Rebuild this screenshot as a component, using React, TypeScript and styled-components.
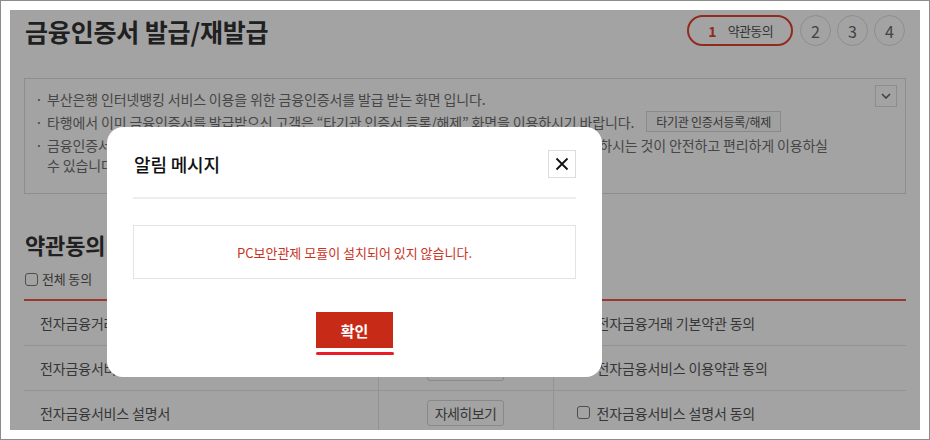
import styled, { createGlobalStyle } from 'styled-components';

const GlobalStyle = createGlobalStyle`
  html, body {
    margin: 0;
    padding: 0;
    background: #fff;
  }
  body {
    font-family: "Noto Sans CJK KR", "Noto Sans", sans-serif;
  }
`;

const Frame = styled.div`
  width: 930px;
  height: 440px;
  box-sizing: border-box;
  border: 1px solid #8c8c8c;
  padding: 9px;
  letter-spacing: -0.01em;
`;

const Viewport = styled.div`
  position: relative;
  width: 910px;
  height: 420px;
  overflow: hidden;
  background: #fff;
`;

const Page = styled.div`
  padding: 5px 14px 0 14px;
`;

const Header = styled.div`
  display: flex;
  justify-content: space-between;
  align-items: flex-start;
`;

const PageTitle = styled.h1`
  margin: 0 0 0 1px;
  font-size: 25px;
  line-height: 32px;
  font-weight: 700;
  color: #333;
`;

const Steps = styled.ol`
  display: flex;
  gap: 6px;
  margin: 0 1px 0 0;
  padding: 0;
  list-style: none;
`;

const Step = styled.li<{ $active?: boolean }>`
  box-sizing: border-box;
  height: 31px;
  min-width: 31px;
  display: flex;
  align-items: center;
  justify-content: center;
  gap: 12px;
  border-radius: 16px;
  border: ${p => (p.$active ? '2px solid #e0452f' : '1px solid #dedede')};
  padding: ${p => (p.$active ? '0 18px 0 19px' : '0')};
  margin-right: ${p => (p.$active ? '1px' : '0')};
  font-size: ${p => (p.$active ? '13px' : '16px')};
  letter-spacing: ${p => (p.$active ? '-0.05em' : '0')};
  color: #6a6a6a;
`;

const StepNum = styled.span`
  color: #e0452f;
  font-weight: 700;
  font-size: 14px;
`;

const StepLabel = styled.span`
  color: #555;
`;

const InfoBox = styled.div`
  position: relative;
  box-sizing: border-box;
  height: 116px;
  margin-top: 31px;
  border: 1px solid #ddd;
  padding: 10px 50px 0 10px;
`;

const InfoList = styled.ul`
  margin: 0;
  padding: 0;
  list-style: none;
  display: flex;
  flex-direction: column;
  gap: 3px;
`;

const InfoItem = styled.li`
  display: flex;
  align-items: flex-start;
  font-size: 14px;
  line-height: 20px;
  letter-spacing: -0.01em;
  color: #6e6e6e;
`;

const Bullet = styled.span`
  flex: none;
  width: 12px;
`;

const SmallButton = styled.button`
  flex: none;
  height: 21px;
  margin: -1px 0 0 12px;
  padding: 0 9px;
  border: 1px solid #d8d8d8;
  background: #fafafa;
  font-family: inherit;
  font-size: 12px;
  letter-spacing: -0.02em;
  color: #555;
`;

const ToggleButton = styled.button`
  position: absolute;
  top: 6px;
  right: 8px;
  width: 22px;
  height: 22px;
  padding: 0;
  display: flex;
  align-items: center;
  justify-content: center;
  border: 1px solid #ddd;
  background: #fff;
`;

const SectionTitle = styled.h2`
  margin: 35px 0 0 1px;
  font-size: 22px;
  line-height: 30px;
  font-weight: 700;
  color: #333;
`;

const AllAgree = styled.label`
  display: flex;
  align-items: center;
  gap: 4px;
  margin-top: 10px;
  margin-left: 1px;
  font-size: 13px;
  line-height: 20px;
  color: #555;
`;

const Check = styled.span`
  box-sizing: border-box;
  width: 13px;
  height: 13px;
  border: 1.5px solid #7a7a7a;
  border-radius: 3px;
  background: #fff;
  flex: none;
`;

const Terms = styled.table`
  width: 100%;
  margin-top: 10px;
  border-collapse: collapse;
  border-top: 2px solid #f05a44;
`;

const Row = styled.tr`
  height: 45px;
  border-bottom: 1px solid #e6e6e6;
`;

const Cell = styled.td<{ $w?: number; $align?: string; $pad?: number }>`
  box-sizing: border-box;
  width: ${p => (p.$w ? `${p.$w}px` : 'auto')};
  padding: 0 0 0 ${p => p.$pad ?? 0}px;
  text-align: ${p => p.$align ?? 'left'};
  font-size: 14px;
  color: #555;
  & + & {
    border-left: 1px solid #e6e6e6;
  }
`;

const DetailButton = styled.button`
  height: 26px;
  width: 77px;
  padding: 0;
  border: 1px solid #d6d6d6;
  border-radius: 3px;
  background: #fff;
  font-family: inherit;
  font-size: 14px;
  letter-spacing: -0.04em;
  color: #555;
`;

const AgreeLabel = styled.label`
  display: flex;
  align-items: center;
  gap: 7px;
`;

const Overlay = styled.div`
  position: absolute;
  inset: 0;
  background: rgba(0, 0, 0, 0.36);
`;

const Modal = styled.div`
  position: absolute;
  left: 97px;
  top: 117px;
  box-sizing: border-box;
  width: 495px;
  height: 250px;
  padding: 23px 26px 0 26px;
  border-radius: 16px;
  background: #fff;
`;

const ModalHeader = styled.div`
  display: flex;
  justify-content: space-between;
  align-items: center;
  height: 28px;
`;

const ModalTitle = styled.h3`
  margin: 0 0 0 1px;
  font-size: 18px;
  font-weight: 500;
  color: #111;
`;

const CloseButton = styled.button`
  box-sizing: border-box;
  width: 28px;
  height: 28px;
  padding: 0;
  display: flex;
  align-items: center;
  justify-content: center;
  border: 1px solid #dcdcdc;
  background: #fff;
`;

const Divider = styled.hr`
  margin: 19px 0 0 0;
  border: 0;
  height: 2px;
  background: #eeeeee;
`;

const MessageBox = styled.div`
  box-sizing: border-box;
  height: 54px;
  margin-top: 26px;
  display: flex;
  align-items: center;
  justify-content: center;
  border: 1px solid #e3e3e3;
  font-size: 13px;
  letter-spacing: 0;
  color: #c9321d;
`;

const Actions = styled.div`
  display: flex;
  flex-direction: column;
  align-items: center;
  margin-top: 33px;
`;

const ConfirmButton = styled.button`
  width: 77px;
  height: 36px;
  padding: 0;
  border: 0;
  background: #c72a17;
  color: #fff;
  font-family: inherit;
  font-size: 15px;
  font-weight: 700;
  letter-spacing: 0;
`;

const FocusBar = styled.span`
  display: block;
  width: 78px;
  height: 3px;
  margin-top: 4px;
  border-radius: 2px;
  background: #ea1c26;
`;

const terms = [
  ['전자금융거래 기본약관', '전자금융거래 기본약관 동의'],
  ['전자금융서비스 이용약관', '전자금융서비스 이용약관 동의'],
  ['전자금융서비스 설명서', '전자금융서비스 설명서 동의'],
];

export default function App() {
  return (
    <Frame>
      <GlobalStyle />
      <Viewport>
        <Page>
          <Header>
            <PageTitle>금융인증서 발급/재발급</PageTitle>
            <Steps>
              <Step $active>
                <StepNum>1</StepNum>
                <StepLabel>약관동의</StepLabel>
              </Step>
              <Step>2</Step>
              <Step>3</Step>
              <Step>4</Step>
            </Steps>
          </Header>

          <InfoBox>
            <InfoList>
              <InfoItem>
                <Bullet>·</Bullet>
                <span>부산은행 인터넷뱅킹 서비스 이용을 위한 금융인증서를 발급 받는 화면 입니다.</span>
              </InfoItem>
              <InfoItem>
                <Bullet>·</Bullet>
                <span>타행에서 이미 금융인증서를 발급받으신 고객은 “타기관 인증서 등록/해제” 화면을 이용하시기 바랍니다.</span>
                <SmallButton>타기관 인증서등록/해제</SmallButton>
              </InfoItem>
              <InfoItem>
                <Bullet>·</Bullet>
                <span>
                  금융인증서는 금융결제원 클라우드에 보관되어 여러 기기에서 이용할 수 있으므로 클라우드로 이용하시는 것이 안전하고 편리하게 이용하실
                  <br />
                  수 있습니다.
                </span>
              </InfoItem>
            </InfoList>
            <ToggleButton aria-label="펼치기">
              <svg width="10" height="6" viewBox="0 0 10 6">
                <path d="M1 1l4 4 4-4" fill="none" stroke="#666" strokeWidth="1.6" />
              </svg>
            </ToggleButton>
          </InfoBox>

          <SectionTitle>약관동의</SectionTitle>
          <AllAgree>
            <Check />
            전체 동의
          </AllAgree>

          <Terms>
            <tbody>
              {terms.map(([name, agree]) => (
                <Row key={name}>
                  <Cell $w={354} $pad={16}>{name}</Cell>
                  <Cell $w={175} $align="center">
                    <DetailButton>자세히보기</DetailButton>
                  </Cell>
                  <Cell $pad={23}>
                    <AgreeLabel>
                      <Check />
                      {agree}
                    </AgreeLabel>
                  </Cell>
                </Row>
              ))}
            </tbody>
          </Terms>
        </Page>

        <Overlay />
        <Modal role="dialog">
          <ModalHeader>
            <ModalTitle>알림 메시지</ModalTitle>
            <CloseButton aria-label="닫기">
              <svg width="14" height="14" viewBox="0 0 14 14">
                <path d="M1.5 1.5l11 11M12.5 1.5l-11 11" stroke="#111" strokeWidth="1.8" />
              </svg>
            </CloseButton>
          </ModalHeader>
          <Divider />
          <MessageBox>PC보안관제 모듈이 설치되어 있지 않습니다.</MessageBox>
          <Actions>
            <ConfirmButton>확인</ConfirmButton>
            <FocusBar />
          </Actions>
        </Modal>
      </Viewport>
    </Frame>
  );
}
